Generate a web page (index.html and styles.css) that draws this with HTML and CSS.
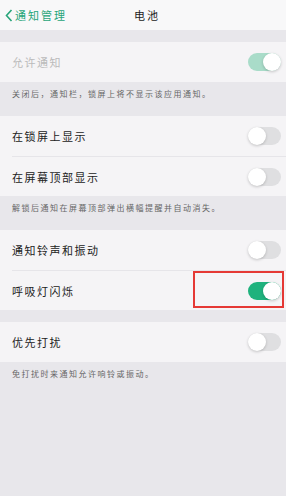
FILE: index.html
```html
<!DOCTYPE html>
<html lang="zh">
<head>
    <meta charset="UTF-8">
    <meta name="viewport" content="width=device-width, initial-scale=1.0">
    <title>电池</title>
    <link rel="stylesheet" href="styles.css">
</head>
<body>
    <div class="topbar">
        <div class="back">
            <svg width="8" height="13" viewBox="0 0 8 13"><path d="M6.5 1 L1.5 6.5 L6.5 12" fill="none" stroke="#27a57a" stroke-width="1.6"/></svg>
            <span>通知管理</span>
        </div>
        <div class="title">电池</div>
    </div>

    <div class="gap"></div>

    <div class="group">
        <div class="row disabled">
            <span>允许通知</span>
            <div class="switch on faded"><div class="knob"></div></div>
        </div>
    </div>
    <div class="note">关闭后，通知栏，锁屏上将不显示该应用通知。</div>

    <div class="group">
        <div class="row">
            <span>在锁屏上显示</span>
            <div class="switch"><div class="knob"></div></div>
        </div>
        <div class="row">
            <span>在屏幕顶部显示</span>
            <div class="switch"><div class="knob"></div></div>
        </div>
    </div>
    <div class="note">解锁后通知在屏幕顶部弹出横幅提醒并自动消失。</div>

    <div class="group">
        <div class="row">
            <span>通知铃声和振动</span>
            <div class="switch"><div class="knob"></div></div>
        </div>
        <div class="row highlight">
            <span>呼吸灯闪烁</span>
            <div class="switch on"><div class="knob"></div></div>
            <div class="redbox"></div>
        </div>
    </div>

    <div class="gap"></div>

    <div class="group">
        <div class="row">
            <span>优先打扰</span>
            <div class="switch"><div class="knob"></div></div>
        </div>
    </div>
    <div class="note">免打扰时来通知允许响铃或振动。</div>
</body>
</html>
```

FILE: styles.css
```css
* {
    box-sizing: border-box;
}

body {
    margin: 0;
    height: 496px;
    background-color: #e8e7eb;
    font-family: "Noto Sans CJK SC", "Noto Sans", sans-serif;
    color: #222;
}

.topbar {
    height: 30px;
    background-color: #f8f8f9;
    position: relative;
    display: flex;
    align-items: center;
    justify-content: center;
}

.back {
    position: absolute;
    left: 5px;
    top: 7px;
    display: flex;
    align-items: center;
    gap: 2px;
    color: #27a57a;
    font-size: 11px;
    letter-spacing: 2px;
}

.title {
    font-size: 11px;
    letter-spacing: 2px;
    margin-left: 8px;
}

.gap {
    height: 12px;
}

.group {
    background-color: #f5f4f6;
    padding-left: 12px;
}

.row {
    height: 40px;
    display: flex;
    align-items: center;
    justify-content: space-between;
    padding-right: 5px;
    font-size: 11px;
    letter-spacing: 1.5px;
    border-top: 1px solid #e6e5e9;
    position: relative;
}

.row:first-child {
    border-top: none;
}

.row.disabled {
    color: #bbb;
}

.switch {
    width: 33px;
    height: 18px;
    border-radius: 9px;
    background-color: #dfdfe1;
    position: relative;
}

.switch .knob {
    position: absolute;
    left: 0;
    top: 0;
    width: 18px;
    height: 18px;
    border-radius: 50%;
    background-color: #fff;
    box-shadow: 0 1px 3px rgba(0,0,0,0.2);
}

.switch.on {
    background-color: #1fb27d;
}

.switch.on .knob {
    left: 15px;
}

.switch.faded {
    background-color: #a9dcc9;
}

.note {
    padding: 6px 12px 0;
    height: 34px;
    font-size: 8px;
    letter-spacing: 1.5px;
    color: #666;
}

.redbox {
    position: absolute;
    left: 181px;
    top: 0;
    width: 91px;
    height: 37px;
    border: 2px solid #e53935;
}
```
